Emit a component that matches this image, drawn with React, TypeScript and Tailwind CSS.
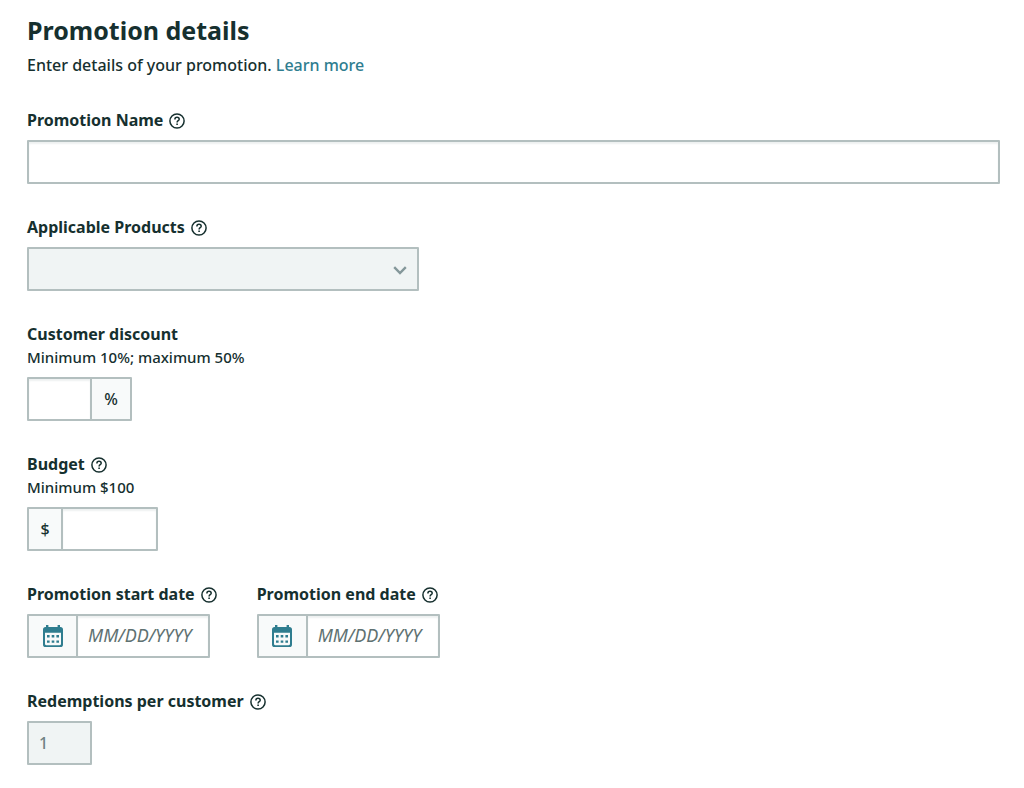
import React, { ReactNode } from "react";

// Shared styles
const FIELD =
  "h-11 rounded-[1px] border-2 border-[#b3bfbf] bg-white px-2.5 text-base text-[#16302f] shadow-[inset_0_2px_2px_#eef1f1] outline-none focus:border-[#2f7d8f]";

const ADDON =
  "flex h-11 items-center justify-center rounded-[1px] border-2 border-[#b3bfbf] bg-[#f8fafa] text-base font-medium";

// Icons
const HelpIcon = () => (
  <svg width="16" height="16" viewBox="0 0 16 16" fill="none" stroke="currentColor" strokeWidth="1.5">
    <circle cx="8" cy="8" r="7.1" />
    <path d="M5.9 6.4C5.9 5.1 6.8 4.3 8 4.3s2.2.8 2.2 1.9c0 1.5-2.1 1.5-2.1 3.2" />
    <path d="M8.1 10.5v1.6" strokeWidth="1.6" />
  </svg>
);

const CalendarIcon = () => (
  <svg width="20" height="22" viewBox="0 0 20 22" fill="#2f7d8f">
    <path
      fillRule="evenodd"
      d="M3 0h2.4v2h9.2V0H17v2h.4A2.6 2.6 0 0 1 20 4.6v14.8a2.6 2.6 0 0 1-2.6 2.6H2.6A2.6 2.6 0 0 1 0 19.4V4.6A2.6 2.6 0 0 1 2.6 2H3V0ZM2 7.8v11c0 1 .5 1.4 1.4 1.4h13.2c.9 0 1.4-.4 1.4-1.4v-11H2Z"
    />
    <path d="M4 10h2.6v2.4H4zM8.7 10h2.6v2.4H8.7zM13.4 10H16v2.4h-2.6zM4 15.4h2.6v2.4H4zM8.7 15.4h2.6v2.4H8.7zM13.4 15.4H16v2.4h-2.6z" />
  </svg>
);

// Field
type FieldProps = {
  id: string;
  label: string;
  hint?: string;
  help?: boolean;
  children: ReactNode;
};

const Field = ({ id, label, hint, help = true, children }: FieldProps) => (
  <div>
    <div className="flex items-center gap-1.5 leading-[23px]">
      <label htmlFor={id} className="font-bold">
        {label}
      </label>
      {help && (
        <button type="button" aria-label={`Help: ${label}`} className="cursor-pointer">
          <HelpIcon />
        </button>
      )}
    </div>
    {hint && (
      <p id={`${id}-hint`} className="text-[15px] leading-[23px] font-medium">
        {hint}
      </p>
    )}
    <div className="mt-2 flex">{children}</div>
  </div>
);

// DateField
const DateField = ({ id, label }: { id: string; label: string }) => (
  <Field id={id} label={label}>
    <button type="button" aria-label={`Pick ${label}`} className={`${ADDON} w-[51px] cursor-pointer`}>
      <CalendarIcon />
    </button>
    <input
      id={id}
      type="text"
      placeholder="MM/DD/YYYY"
      className={`${FIELD} -ml-0.5 w-[134px] placeholder:text-[18px] placeholder:text-[#5f7272] placeholder:italic`}
    />
  </Field>
);

// Main form
const App = () => {
  return (
    <main className="bg-white pt-[15px] pr-6 pb-6 pl-[27px] font-['Noto_Sans','Open_Sans',sans-serif] text-base text-[#16302f]">
      <h1 className="text-[25px] leading-[30px] font-bold">Promotion details</h1>
      <p className="mt-2 leading-6 font-medium">
        Enter details of your promotion.{" "}
        <a href="#learn-more" className="text-[#2f7d8f] hover:underline">
          Learn more
        </a>
      </p>

      <form className="mt-8 flex flex-col gap-8">
        <Field id="name" label="Promotion Name">
          <input id="name" type="text" className={`${FIELD} w-full`} />
        </Field>

        <Field id="products" label="Applicable Products">
          <div className="relative w-98">
            <select
              id="products"
              disabled
              className="h-11 w-full appearance-none rounded-[1px] border-2 border-[#b3bfbf] bg-[#f0f4f4] px-2.5 opacity-100"
            />
            <svg
              className="pointer-events-none absolute top-[19px] right-3"
              width="14"
              height="9"
              viewBox="0 0 14 9"
              fill="none"
              stroke="#84979a"
              strokeWidth="2.4"
            >
              <path d="M1.2 1.2 7 7l5.8-5.8" />
            </svg>
          </div>
        </Field>

        <Field id="discount" label="Customer discount" hint="Minimum 10%; maximum 50%" help={false}>
          <input id="discount" type="text" aria-describedby="discount-hint" className={`${FIELD} w-[65px]`} />
          <span className={`${ADDON} -ml-0.5 w-[42px]`}>%</span>
        </Field>

        <Field id="budget" label="Budget" hint="Minimum $100">
          <span className={`${ADDON} w-9`}>$</span>
          <input id="budget" type="text" aria-describedby="budget-hint" className={`${FIELD} -ml-0.5 w-[97px]`} />
        </Field>

        <div className="flex flex-wrap gap-x-10 gap-y-8">
          <DateField id="start-date" label="Promotion start date" />
          <DateField id="end-date" label="Promotion end date" />
        </div>

        <Field id="redemptions" label="Redemptions per customer">
          <input
            id="redemptions"
            type="text"
            defaultValue="1"
            disabled
            className="h-11 w-[65px] rounded-[1px] border-2 border-[#b3bfbf] bg-[#f0f4f4] px-2.5 font-medium text-[#6f8283]"
          />
        </Field>
      </form>
    </main>
  );
};

export default App;
